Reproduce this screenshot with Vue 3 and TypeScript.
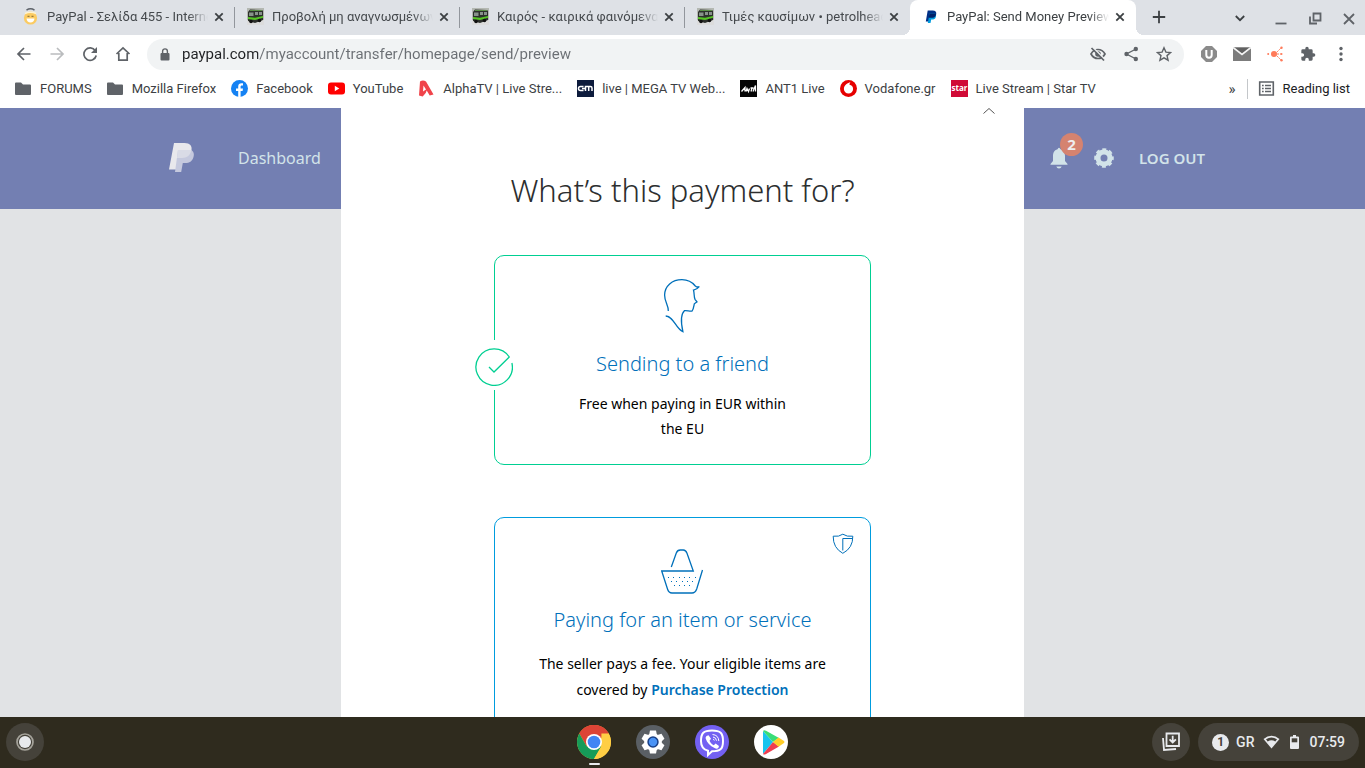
<script setup lang="ts">
import { ref } from 'vue'

interface Tab { title: string; icon: 'face' | 'bus' | 'paypal' }
interface Bookmark { label: string; icon: string }

const tabs: Tab[] = [
  { title: 'PayPal - Σελίδα 455 - Internet', icon: 'face' },
  { title: 'Προβολή μη αναγνωσμένων', icon: 'bus' },
  { title: 'Καιρός - καιρικά φαινόμενα', icon: 'bus' },
  { title: 'Τιμές καυσίμων • petrolheads', icon: 'bus' },
  { title: 'PayPal: Send Money Preview', icon: 'paypal' },
]
const active = ref(4)

const bookmarks: Bookmark[] = [
  { label: 'FORUMS', icon: 'folder' },
  { label: 'Mozilla Firefox', icon: 'folder' },
  { label: 'Facebook', icon: 'facebook' },
  { label: 'YouTube', icon: 'youtube' },
  { label: 'AlphaTV | Live Stre...', icon: 'alpha' },
  { label: 'live | MEGA TV Web...', icon: 'mega' },
  { label: 'ANT1 Live', icon: 'ant' },
  { label: 'Vodafone.gr', icon: 'vodafone' },
  { label: 'Live Stream | Star TV', icon: 'star' },
]

const url = ref('paypal.com/myaccount/transfer/homepage/send/preview')
const purpose = ref('friend')
const dots = [
  ...[8, 13, 19, 24, 29, 35].map((x) => ({ x, y: 32 })),
  ...[11, 16, 22, 27, 32].map((x) => ({ x, y: 36 })),
  ...[14, 19, 24, 29].map((x) => ({ x, y: 40 })),
]
</script>

<template>
  <div class="screen">
    <header class="tabstrip">
      <div v-for="(t, i) in tabs" :key="i" class="tab" :class="{ active: i === active, last: i === active - 1 }">
        <svg v-if="t.icon === 'face'" class="fav" viewBox="0 0 17 17">
          <circle cx="8.500" cy="10" r="6.600" fill="#fbcb62" />
          <path d="M4.500 2.200Q8.500-.5 12.500 2.200" fill="none" stroke="#5d6269" stroke-width="1.500" />
          <path d="M3 5.500Q8.500 3 14 5.500" fill="none" stroke="#fff3cf" stroke-width="1.400" />
          <path d="M4.500 10.500h8q-.5 4-4 4t-4-4z" fill="#fff" /><path d="M5.500 8.300h2M9.500 8.300h2" stroke="#7d6435" />
        </svg>
        <svg v-else-if="t.icon === 'bus'" class="fav" viewBox="0 0 17 17">
          <path d="M0 0h17v17H0z" fill="#b4b8b2" /><path d="M0 12h17v5H0z" fill="#dcdcdc" />
          <path d="M1 4l2-2.500L15 2l1 1v9l-8 3-7-2z" fill="#2c302b" />
          <path d="M2 4.500h4.500v3.500H2zM8 4h3v3H8zM12 4h3v3h-3z" fill="#87918a" />
          <path d="M1 9l7 .8L16 8v1.800l-8 2.200-7-1z" fill="#56c424" /><path d="M3 2.500h12" stroke="#5b8f48" />
          <circle cx="4" cy="13.500" r="1.800" fill="#111" /><circle cx="12.500" cy="12.500" r="1.800" fill="#111" />
        </svg>
        <svg v-else class="fav" viewBox="0 0 17 17">
          <path d="M5.700 2.500h5c2.700 0 4 1.400 3.500 3.800-.5 2.500-2.400 3.500-4.700 3.500H8l-.8 3.700H3.800z" fill="#003087" />
          <path d="M7.500 5.500h5.300c1.300.6 1.500 1.800 1.100 3.200-.5 2.200-2.100 2.900-4.100 2.900H9.200l-.7 3.400H5.800z" fill="#009cde" />
          <path d="M7.500 5.500h5.300c1 .3 1.200.9 1.200 1.400-.6 2.100-2.400 2.900-4.500 2.900H6.600z" fill="#012169" />
        </svg>
        <button class="title" @click="active = i">{{ t.title }}</button>
        <button class="close" aria-label="Close tab"><svg viewBox="0 0 10 10"><path d="M1.300 1.300l7.400 7.400M8.700 1.300L1.300 8.700" /></svg></button>
      </div>
      <button class="newtab" aria-label="New tab"><svg viewBox="0 0 14 14"><path d="M7 .8v12.400M.8 7h12.400" /></svg></button>
      <div class="winctl">
        <button aria-label="Search tabs"><svg viewBox="0 0 16 16"><path d="M3.800 6L8 10.200 12.200 6" stroke-width="2" /></svg></button>
        <button aria-label="Minimise"><svg viewBox="0 0 16 16"><path d="M2.500 13.500h11" stroke-width="1.500" /></svg></button>
        <button aria-label="Restore"><svg viewBox="0 0 16 16"><path d="M6.500 3.500h7v7h-7zM3 6.500v7h7" stroke-width="1.500" /></svg></button>
        <button aria-label="Close"><svg viewBox="0 0 16 16"><path d="M3 4l10 10M13 4L3 14" stroke-width="1.600" /></svg></button>
      </div>
    </header>

    <nav class="toolbar" aria-label="Navigation">
      <button class="tool" aria-label="Back"><svg viewBox="0 0 16 16"><path class="ln" d="M14.500 8H2M8 2L2 8l6 6" /></svg></button>
      <button class="tool dim" aria-label="Forward"><svg viewBox="0 0 16 16"><path class="ln" d="M1.500 8H14M8 2l6 6-6 6" /></svg></button>
      <button class="tool" aria-label="Reload"><svg viewBox="0 0 16 16"><path class="ln" d="M13.300 4.700A6.200 6.200 0 1 0 14.200 9.500" /><path d="M15 1v6H9z" /></svg></button>
      <button class="tool" aria-label="Home"><svg viewBox="0 0 16 16"><path class="ln" d="M1.500 8L8 1.800 14.500 8M3.800 7v7.200h8.400V7" /></svg></button>
      <div class="omnibox">
        <svg class="lock" viewBox="0 0 10 13"><path d="M1.500 5h7q1 0 1 1v5.500q0 1-1 1h-7q-1 0-1-1V6q0-1 1-1z" /><path class="ln thin" d="M2.600 5V3.300a2.400 2.400 0 0 1 4.800 0V5" /></svg>
        <input v-model="url" class="url" type="text" aria-label="Address" spellcheck="false" />
        <button class="tool" aria-label="Cookies blocked"><svg viewBox="0 0 16 16"><path class="ln" d="M1 8q2.500-4.500 7-4.500T15 8q-2.500 4.500-7 4.500T1 8z" /><circle cx="8" cy="8" r="2.800" /><path d="M3 1.500l12 12" stroke="#f1f3f4" stroke-width="1.500" /><path class="ln" d="M1.500 2l12.500 12.500" /></svg></button>
        <button class="tool" aria-label="Share"><svg viewBox="0 0 16 16"><path class="ln thin" d="M13 3L3.500 8l9.500 5" /><circle cx="12.800" cy="3" r="2.200" /><circle cx="3.500" cy="8" r="2.200" /><circle cx="12.800" cy="13" r="2.200" /></svg></button>
        <button class="tool" aria-label="Bookmark"><svg viewBox="0 0 16 16"><path class="ln thin" d="M8 1.800l1.900 4.300 4.700.4L11 9.600l1.100 4.600L8 11.800l-4.100 2.400L5 9.600 1.400 6.500l4.700-.4z" /></svg></button>
      </div>
      <div class="exts">
        <button class="tool" aria-label="Shield extension"><svg viewBox="0 0 16 16"><path d="M5 0h6l5 5v6l-5 5H5l-5-5V5z" fill="#8b8b8b" /><path d="M5.300 4v5a2.700 2.700 0 0 0 5.400 0V4" fill="none" stroke="#fff" stroke-width="2" /></svg></button>
        <button class="tool wide" aria-label="Mail extension"><svg viewBox="0 0 18 16"><path d="M0 1.500h18v13.500H0z" fill="#7c7c7c" /><path d="M0 1.500l9 7 9-7" fill="#616161" stroke="#f4f4f4" stroke-width="1.700" /></svg></button>
        <button class="tool net" aria-label="Network extension"><svg viewBox="0 0 16 16"><circle cx="7" cy="8" r="3" /><circle cx="1.200" cy="8" r="1" /><circle cx="14.500" cy="1.800" r="1.200" /><circle cx="14.500" cy="8" r="1" /><circle cx="14.500" cy="14.200" r="1.200" /><path d="M8 8l6-6M8 8l6 6M10 8h4" /></svg></button>
        <button class="tool" aria-label="Extensions"><svg viewBox="0 0 24 24"><path d="M20.500 11H19V7a2 2 0 0 0-2-2h-4V3.500a2.500 2.500 0 0 0-5 0V5H4a2 2 0 0 0-2 2v3.800h1.500a2.700 2.700 0 0 1 0 5.400H2V20a2 2 0 0 0 2 2h3.800v-1.500a2.700 2.700 0 0 1 5.400 0V22H17a2 2 0 0 0 2-2v-4h1.500a2.500 2.500 0 0 0 0-5z" /></svg></button>
        <button class="tool" aria-label="Menu"><svg viewBox="0 0 16 16"><circle cx="8" cy="2.500" r="1.700" /><circle cx="8" cy="8" r="1.700" /><circle cx="8" cy="13.500" r="1.700" /></svg></button>
      </div>
    </nav>

    <nav class="bookmarks" aria-label="Bookmarks">
      <a v-for="b in bookmarks" :key="b.label" href="#" class="bm">
        <svg viewBox="0 0 17 17">
          <path v-if="b.icon === 'folder'" d="M1 2.500h5l2 2h7q1 0 1 1V14q0 1-1 1H1q-1 0-1-1V3.500q0-1 1-1z" fill="#5f6368" />
          <g v-else-if="b.icon === 'facebook'"><circle cx="8.500" cy="8.500" r="8.500" fill="#1582f3" /><path d="M7.200 17v-6H5V8.500h2.200v-2c0-2.200 1.300-3.300 3.300-3.300l1.500.1v2.200h-1.100c-1 0-1.300.6-1.300 1.300v1.700H12L11.600 11h-2v6z" fill="#fff" /></g>
          <g v-else-if="b.icon === 'youtube'"><rect y="2.500" width="17" height="12" rx="3" fill="#f00" /><path d="M6.800 5.800l4.500 2.700-4.500 2.700z" fill="#fff" /></g>
          <g v-else-if="b.icon === 'alpha'" fill="#f0434a"><path d="M2 1.500q3-2 6 0l7.500 13-3.800 1-3-5-1 2.500-3 3.500-3.700-1z" /><path d="M5.500 5.500l2.500 4-3 2z" fill="#fff" /></g>
          <g v-else-if="b.icon === 'mega'"><path d="M0 0h17v17H0z" fill="#0d1b3c" /><path d="M6.500 6.500H3.500q-2 0-2 2t2 2h3M5 8.500h3M8.500 11V6.500h5q1.500 0 1.500 1.500v3M11.700 7v4" fill="none" stroke="#fff" stroke-width="1.500" /></g>
          <g v-else-if="b.icon === 'ant'"><path d="M0 0h17v17H0z" fill="#050505" /><path d="M1.500 11.500l3.500-4v4M6 11.500l1-3 1.500 3 1-3M10.500 8h3M12 8l-1 3.500M13 11.500l2.500-6v6" fill="none" stroke="#fff" stroke-width="1.300" /></g>
          <g v-else-if="b.icon === 'vodafone'"><circle cx="8.500" cy="8.500" r="8.500" fill="#e60000" /><path d="M10.500 2.200C8 2.500 3.900 5 3.900 9a4.600 4.600 0 0 0 9.200 0c0-2.400-1.600-3.800-3.600-4.200 0-1.200.3-1.900 1-2.600z" fill="#fff" /></g>
          <g v-else><path d="M0 0h17v17H0z" fill="#d00a36" /><text x="8.500" y="10.500" text-anchor="middle" class="startv">star</text></g>
        </svg>
        <span>{{ b.label }}</span>
      </a>
      <button class="more" aria-label="More bookmarks">»</button>
      <button class="bm reading">
        <svg viewBox="0 0 17 17"><path d="M1.700 2h13.600v13H1.700z" fill="none" stroke="#5f6368" stroke-width="1.600" /><path d="M4 5.500h1.700M7 5.500h6M4 8.500h1.700M7 8.500h6M4 11.500h1.700M7 11.500h6" stroke="#5f6368" stroke-width="1.500" /></svg>
        <span>Reading list</span>
      </button>
    </nav>

    <div class="page">
      <header class="site">
        <a href="#" class="logo" aria-label="PayPal"><svg viewBox="0 0 25 30">
          <path d="M5 0h10.500c5.500 0 8 2.800 6.900 7.800-1 5-4.600 7.200-9.400 7.200H9L7 26.500H0z" fill="#e8e8ec" />
          <path d="M9 7h13.300c2.500 1.500 3 4 2.200 7-1.100 4.400-4.200 6-8.200 6h-2.500l-1.600 9H6z" fill="#c5c9de" />
          <path d="M9 7h13.300c-.7 5-4.300 8-9.300 8H8z" fill="#d9dbe6" />
        </svg></a>
        <a href="#" class="dash">Dashboard</a>
        <div class="right">
          <a href="#" class="bell" aria-label="Notifications">
            <svg viewBox="0 0 18 22"><path d="M9 .8c.9 0 .8 1 1.500 1.400C14 3.300 15 6 15 9v5l2.500 3v.7H.5V17L3 14V9c0-3 1-5.700 4.500-6.800C8.200 1.800 8.100.8 9 .8zM6.300 19.500h5.400q-.7 2-2.700 2t-2.700-2z" /></svg>
            <span class="badge">2</span>
          </a>
          <a href="#" class="gear" aria-label="Settings"><svg viewBox="-10 -10 20 20">
            <circle r="6" fill="none" stroke="#d2e3e9" stroke-width="5" />
            <circle r="8.500" fill="none" stroke="#d2e3e9" stroke-width="2.600" stroke-dasharray="3.900 2.776" stroke-dashoffset="1.950" />
          </svg></a>
          <a href="#" class="logout">LOG OUT</a>
        </div>
      </header>

      <main class="modal">
        <button class="collapse" aria-label="Scroll up"><svg viewBox="0 0 12 6"><path d="M.5 5.500L6 .5l5.500 5" /></svg></button>
        <h1>What’s this payment for?</h1>
        <label class="card friend">
          <input v-model="purpose" type="radio" name="purpose" value="friend" />
          <span class="tick"><svg viewBox="475 348 38 38"><path d="M489 367l5 5 15.300-15A18.200 18.200 0 1 0 511.900 363" /></svg></span>
          <svg class="head" viewBox="1 0 44 60"><path d="M8.300 36c.2-6-3.700-9-3.700-16C4.800 11 12 4.700 22 4.700c7 0 10.500 2.800 13.300 6.300q2 1.600 4 .7-2 2.500-5.800 3.400c1 3.500.3 6.500 1.500 9.200l2 2.600-2.700 1.900c-.5 2.500-.8 5.200-2.200 7.200-2.700.4-5.200-.8-7.500-.4-5 4.500-3.300 14-1.700 21.100C15.500 53.500 14 41.500 5.700 41" /></svg>
          <span class="name">Sending to a friend</span>
          <span class="desc narrow">Free when paying in EUR within the EU</span>
        </label>
        <label class="card goods">
          <input v-model="purpose" type="radio" name="purpose" value="goods" />
          <svg class="shield" viewBox="0 0 22 22"><path d="M1.200 3.200Q7 4 10.800 1.200 15 4 20.800 3.200 21 15 10.800 20.300 1 15 1.200 3.200zM10.800 17.500V5.500h9.500" /></svg>
          <svg class="basket" viewBox="1 0 44 50">
            <path d="M11.300 22l5-14q1-3 4-3h3q2.500 0 3.700 3.200L33.300 26H1.700l5.800 18q1.200 4 4.500 4h20q3.300 0 4.700-4l5.800-19" />
            <rect v-for="(d, i) in dots" :key="i" :x="d.x" :y="d.y" width="1" height="1" />
          </svg>
          <span class="name">Paying for an item or service</span>
          <span class="desc">The seller pays a fee. Your eligible items are covered by <a href="#">Purchase Protection</a></span>
        </label>
      </main>
    </div>

    <footer class="shelf">
      <button class="round launcher" aria-label="Launcher"><svg viewBox="0 0 18 18"><circle cx="9" cy="9" r="8" fill="none" stroke="#a5a39b" stroke-width="1.700" /><circle cx="9" cy="9" r="6" fill="#e8eaed" /></svg></button>
      <div class="apps">
        <button class="running" aria-label="Chrome"><svg viewBox="-17 -17 34 34">
          <circle r="17" fill="#fcc934" /><path d="M0 0L-14.700-8.500A17 17 0 0 1 14.700-8.500z" fill="#dd4436" /><path d="M0-8.500h14.700A17 17 0 0 0-14.700-8.500L-7.400 4.200z" fill="#dd4436" />
          <path d="M-14.700-8.500A17 17 0 0 0 0 17L7.400 4.200 0 6-7.400 4.200z" fill="#169b58" /><path d="M7.400-8.500h7.300A17 17 0 0 1 0 17L7.400 4.200z" fill="#ffce44" />
          <circle r="8" fill="#fff" /><circle r="6.300" fill="#4285f4" />
        </svg></button>
        <button aria-label="Settings"><svg viewBox="-17 -17 34 34"><circle r="17" fill="#5a5f64" /><g fill="#fff"><circle r="8.800" /><path id="tooth" d="M-3-11.500h6l1 5h-8z" /><use v-for="n in 5" :key="n" href="#tooth" :transform="`rotate(${n * 60})`" /></g><circle r="5.700" fill="#1a3f85" /><circle r="4.200" fill="#4a93f5" /></svg></button>
        <button aria-label="Viber"><svg viewBox="-17 -17 34 34"><circle r="17" fill="#7360f2" /><path d="M0-11.500c8.500 0 11 2.500 11 10.700S8 9.300 0 9.300L-4 13V8.700c-5-1.300-7-4-7-9.500 0-8.200 2.500-10.700 11-10.700z" fill="none" stroke="#fff" stroke-width="2" /><path d="M-5.500-6l2-.8 2.500 3.600-1.500 2C-1.500 1 0 2.300 1.800 3.200l1.800-1.700L7 4l-.7 2q-1.500 1.300-3.800 0C-2 4-5 .5-6.300-3.500q-.4-1.500.8-2.500z" fill="#fff" /><path d="M.5-7.500q6 .5 6.300 6.500M1-5q3.300.5 3.500 3.700M1.200-2.700q1 .2 1.100 1.200" fill="none" stroke="#fff" /></svg></button>
        <button aria-label="Play Store"><svg viewBox="-17 -17 34 34"><circle r="17" fill="#fff" /><path d="M-8-11L2 0-8 12z" fill="#17c4ee" /><path d="M-8-11q1-1.500 3-.3L8-4 2 0z" fill="#39dd77" /><path d="M-8 12q1 1.200 3 0L8 4.500 2 0z" fill="#ef3e50" /><path d="M7.500-4.500L13-1q1 1 0 2L7.500 4.800 2 0z" fill="#ffcd29" /></svg></button>
      </div>
      <div class="status">
        <button class="round" aria-label="Holding space"><svg viewBox="0 0 20 20"><path d="M5.500 1.500h12.500v12.500H5.500z" /><path d="M2 6l1 12 12-1" /><path d="M11.700 3.800v6M8.500 7.300l3.200 3.200 3.200-3.200" /></svg></button>
        <button class="tray">
          <span class="count">1</span><span>GR</span>
          <svg class="wifi" viewBox="0 0 17 14"><path d="M.5 4Q8.500-2.500 16.500 4l-8 9.500z" /><path d="M3 4.300Q8.500.7 14 4.300L12.300 6.400Q8.500 4.300 4.700 6.400z" fill="#45423a" /></svg>
          <svg class="battery" viewBox="0 0 9 14"><path d="M3 0h3v1.500h2q1 0 1 1V13q0 1-1 1H1q-1 0-1-1V2.500q0-1 1-1h2z" /><path d="M1.700 3.300h5.600v4H1.700z" fill="#45423a" /></svg>
          <time>07:59</time>
        </button>
      </div>
    </footer>
  </div>
</template>

<style>
html, body { margin: 0; }
</style>

<style scoped>
.screen { display: flex; flex-direction: column; height: 100vh; overflow: hidden; font-family: Roboto, "Noto Sans", sans-serif; background: #fff; }
* { box-sizing: border-box; }
button { border: 0; background: none; padding: 0; margin: 0; font: inherit; color: inherit; cursor: pointer; }
a { color: inherit; text-decoration: none; }
svg { display: block; flex: none; }

.tabstrip { display: flex; flex: none; height: 35px; padding-left: 10px; background: #dee1e6; color: #45494d; }
.tab { position: relative; display: flex; align-items: center; flex: 0 1 225px; min-width: 0; padding: 0 9px 2px 12px; font-size: 13px; }
.tab:not(.active):not(.last)::after { content: ""; position: absolute; right: 0; top: 7px; width: 1px; height: 21px; background: #92969c; }
.tab.active { flex-basis: 226px; background: #fff; border-radius: 8px 8px 0 0; color: #3c4043; }
.tab.active::before, .tab.active::after { content: ""; position: absolute; bottom: 0; width: 8px; height: 8px; }
.tab.active::before { left: -8px; background: radial-gradient(circle at 0 0, transparent 8px, #fff 8px); }
.tab.active::after { right: -8px; background: radial-gradient(circle at 100% 0, transparent 8px, #fff 8px); }
.fav { width: 17px; height: 17px; }
.title { flex: 1; min-width: 0; margin-left: 8px; overflow: hidden; white-space: nowrap; text-align: left; line-height: 20px; -webkit-mask-image: linear-gradient(to left, transparent, #000 20px); mask-image: linear-gradient(to left, transparent, #000 20px); }
.close { display: grid; place-items: center; width: 14px; height: 14px; margin-left: 4px; }
.close svg { width: 10px; height: 10px; }
.close path, .newtab path, .winctl path { fill: none; stroke: #3c4043; stroke-width: 1.800; }
.newtab { width: 28px; margin-left: 9px; display: grid; place-items: center; padding-bottom: 2px; }
.newtab svg { width: 14px; height: 14px; }
.winctl { display: flex; gap: 18px; margin-left: auto; padding-right: 8px; align-items: center; }
.winctl svg { width: 16px; height: 16px; }
.winctl button:not(:first-child) path { stroke: #5f6368; }
.winctl button:first-child { margin-right: 7px; }

.toolbar { display: flex; align-items: center; flex: none; height: 38px; padding: 0 8px 0 7px; }
.tool { display: grid; place-items: center; width: 33px; height: 30px; }
.tool svg { width: 16px; height: 16px; fill: #5f6368; }
.tool.wide svg { width: 18px; }
.tool.net svg { fill: #ff7a59; }
.tool.net path { fill: none; stroke: #ff7a59; stroke-dasharray: 2 1; }
.tool .ln, .lock .ln { fill: none; stroke: #5f6368; stroke-width: 1.700; }
.tool .thin, .lock .thin { stroke-width: 1.400; }
.tool.dim .ln { stroke: #babcbe; }
.omnibox { display: flex; align-items: center; flex: 1; min-width: 0; height: 31px; margin-left: 8px; padding: 0 4px 0 13px; border-radius: 16px; background: #f1f3f4; }
.lock { width: 10px; height: 13px; fill: #5f6368; }
.url { flex: 1; min-width: 0; margin: 0 0 0 12px; padding: 0; border: 0; outline: 0; font: 15px/20px Roboto, sans-serif; color: transparent; caret-color: #202124; background: linear-gradient(to right, #202124 76px, #6b6f74 76px); -webkit-background-clip: text; background-clip: text; }
.exts { display: flex; margin-left: 8px; }

.bookmarks { display: flex; align-items: center; flex: none; height: 35px; padding: 0 15px 4px; font-size: 13px; color: #3c4043; white-space: nowrap; }
.bm { display: flex; align-items: center; gap: 8px; margin-right: 15px; line-height: 20px; }
.bm svg { width: 17px; height: 17px; }
.startv { font: 700 8px "Open Sans", sans-serif; fill: #fff; }
.more { margin-left: auto; font-size: 15px; }
.reading { margin: 0 0 0 11px; padding-left: 10px; border-left: 1px solid #c4c7ca; color: #202124; }

.page { flex: 1; min-height: 0; display: grid; grid-template: 101px 1fr / 1fr 50% 1fr; overflow: hidden; background: #e1e3e5; font-family: "Noto Sans", "Open Sans", sans-serif; }
.site { grid-area: 1 / 1 / 2 / 4; display: flex; align-items: center; padding: 0 160px 2px 169px; background: #737fb2; color: #d2e3e9; }
.logo svg { width: 25px; height: 30px; }
.dash { margin-left: 44px; font-size: 16px; }
.right { display: flex; align-items: center; margin-left: auto; }
.bell { position: relative; }
.bell svg { width: 18px; height: 22px; fill: #d2e3e9; }
.badge { position: absolute; left: 10px; top: -14px; width: 23px; height: 23px; border-radius: 50%; background: #d58370; color: #eee; font-size: 15px; font-weight: 700; line-height: 23px; text-align: center; }
.gear { margin-left: 26px; }
.gear svg { width: 20px; height: 20px; }
.logout { margin-left: 25px; font-size: 15px; font-weight: 600; }

.modal { grid-area: 1 / 2 / 3 / 3; display: flex; flex-direction: column; align-items: center; background: #fff; }
.collapse { align-self: flex-end; margin-right: 29px; }
.collapse svg { width: 12px; height: 6px; fill: none; stroke: #555; }
h1 { margin: 56px 0 45px; font-size: 31px; line-height: 40px; font-weight: 300; color: #2c2e2f; }
.card { position: relative; display: flex; flex-direction: column; align-items: center; flex: none; width: 377px; max-width: 100%; border: 1px solid #009cde; border-radius: 10px; text-align: center; }
.card input { position: absolute; opacity: 0; margin: 0; }
.card svg { fill: none; stroke: #0070ba; stroke-width: 1.300; }
.friend { padding: 19px 40px 23px; border-color: #00cf92; margin-bottom: 52px; }
.goods { padding: 27px 40px 40px; }
.tick { position: absolute; left: -21px; top: 84px; display: grid; place-items: center; width: 40px; height: 50px; padding-top: 4px; background: #fff; }
.card .tick svg { width: 38px; height: 38px; stroke: #00cf92; }
.head { width: 44px; height: 60px; margin-bottom: 14px; }
.basket { width: 44px; height: 50px; margin-bottom: 10px; }
.card rect { fill: #0070ba; stroke: none; }
.shield { position: absolute; right: 16px; top: 15px; width: 22px; height: 22px; }
.card .shield { stroke-width: 1; }
.name { font-size: 20px; line-height: 30px; font-weight: 300; color: #0070ba; white-space: nowrap; }
.desc { margin-top: 12px; font-size: 14px; line-height: 25px; color: #000; }
.goods .desc { margin-top: 16px; line-height: 26px; }
.desc.narrow { max-width: 220px; }
.desc a { color: #0070ba; font-weight: 600; }

.shelf { display: grid; grid-template-columns: 1fr auto 1fr; align-items: center; flex: none; height: 51px; padding: 0 6px 1px; background: #2f2b1e; color: #e8eaed; }
.round { display: grid; place-items: center; width: 38px; height: 38px; border-radius: 50%; background: #45423a; }
.launcher svg { width: 18px; height: 18px; }
.apps { display: flex; gap: 25px; }
.apps button { position: relative; }
.apps svg { width: 34px; height: 34px; }
.running::after { content: ""; position: absolute; left: 12px; bottom: -6px; width: 11px; height: 2px; border-radius: 1px; background: #e8eaed; }
.status { display: flex; justify-content: flex-end; gap: 8px; }
.status .round svg { width: 20px; height: 20px; fill: none; stroke: #e8eaed; stroke-width: 1.800; }
.tray { display: flex; align-items: center; height: 38px; padding: 0 14px 0 14px; border-radius: 19px; background: #45423a; font-size: 14px; font-weight: 500; }
.count { width: 17px; height: 17px; margin-right: 7px; border-radius: 50%; background: #e8eaed; color: #45423a; font-size: 12px; font-weight: 700; line-height: 17px; text-align: center; }
.tray svg { fill: #e8eaed; }
.wifi { width: 17px; height: 14px; margin-left: 9px; }
.battery { width: 9px; height: 14px; margin: 0 10px; }
</style>
